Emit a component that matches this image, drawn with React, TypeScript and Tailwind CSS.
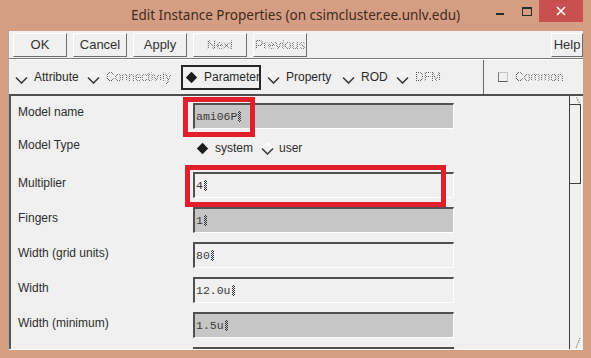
import React from "react";

const sans = "font-['Liberation_Sans',Arial,sans-serif]";
const mono = "font-['Liberation_Mono','Courier_New',monospace]";
const stipple =
  "text-transparent bg-clip-text bg-[repeating-conic-gradient(#5a5a5a_0_25%,transparent_0_50%)] bg-[length:2px_2px]";

function Diamond({ on }: { on?: boolean }) {
  if (on) {
    return (
      <svg width="13" height="13" viewBox="0 0 13 13" className="shrink-0">
        <path d="M6.5 0.8 L12.2 6.5 L6.5 12.2 L0.8 6.5Z" fill="#1c1c1c" />
      </svg>
    );
  }
  return (
    <svg width="13" height="13" viewBox="0 0 13 13" className="shrink-0">
      <path d="M1 6.5 L6.5 1 L12 6.5" fill="none" stroke="#ffffff" strokeWidth="1.4" />
      <path d="M1 6.5 L6.5 12 L12 6.5" fill="none" stroke="#3a3a3a" strokeWidth="1.6" />
    </svg>
  );
}

function Cursor() {
  return (
    <span className="ml-[1px] inline-block h-[11px] w-[3px] bg-[repeating-conic-gradient(#333_0_25%,transparent_0_50%)] bg-[length:2px_2px]" />
  );
}

function Btn({ label, off, w = "w-[54px]" }: { label: string; off?: boolean; w?: string }) {
  return (
    <div
      className={`${w} flex h-[24px] items-center justify-center border-t border-l border-t-white border-l-white border-r border-b border-r-[#6e6e6e] border-b-[#6e6e6e] bg-[#f0f0f0] text-[13px] text-[#333]`}
    >
      <span className={off ? stipple : ""}>{label}</span>
    </div>
  );
}

function Tab({ label, on, off, w, ml }: { label: string; on?: boolean; off?: boolean; w: string; ml?: string }) {
  return (
    <div
      className={`${w} ${ml ?? ""} flex h-[25px] items-center gap-[6px] ${
        on ? "border-2 border-[#262626] px-[2px]" : ""
      }`}
    >
      <Diamond on={on} />
      <span className={`text-[12px] ${off ? stipple : "text-[#2a2a2a]"}`}>{label}</span>
    </div>
  );
}

function Field({ value, ro, mt }: { value: string; ro?: boolean; mt: string }) {
  return (
    <div
      className={`${mt} flex h-[26px] w-[261px] shrink-0 items-center border-t-2 border-l-2 border-t-[#505050] border-l-[#505050] border-r border-b border-r-white border-b-white pl-[1px] ${
        ro ? "bg-[#c6c6c6]" : "bg-[#f0f0f0]"
      } ${mono} text-[11.5px] text-[#3a3a3a]`}
    >
      <span>{value}</span>
      <Cursor />
    </div>
  );
}

function Row({ label, value, ro, h = "h-[35px]", pt = "pt-[12px]", mt = "mt-[8px]" }: {
  label: string;
  value: string;
  ro?: boolean;
  h?: string;
  pt?: string;
  mt?: string;
}) {
  return (
    <div className={`flex ${h} shrink-0 items-start`}>
      <div className={`w-[175px] shrink-0 ${pt} text-[12px] leading-[14px] text-[#2e2e2e]`}>{label}</div>
      <Field value={value} ro={ro} mt={mt} />
    </div>
  );
}

export default function App() {
  return (
    <div className={`relative flex h-[358px] w-[591px] flex-col overflow-hidden bg-[#d59e82] ${sans}`}>
      {/* title bar */}
      <div className="relative flex h-[31px] shrink-0 items-center justify-center">
        <span className="pb-[1px] font-['Noto_Sans',sans-serif] text-[13.5px] text-[#3d2b22]">
          Edit Instance Properties (on csimcluster.ee.unlv.edu)
        </span>
        <div className="absolute left-[496px] top-[13px] h-[2px] w-[8px] bg-[#2b2b2b]" />
        <div className="absolute left-[522px] top-[7px] h-[9px] w-[10px] border border-t-2 border-[#2b2b2b]" />
        <div className="absolute left-[539px] top-0 flex h-[22px] w-[44px] items-center justify-center bg-[#c8504f]">
          <svg width="10" height="10" viewBox="0 0 10 10">
            <path d="M1 1 L9 9 M9 1 L1 9" stroke="#ffffff" strokeWidth="1.6" />
          </svg>
        </div>
      </div>

      {/* client area */}
      <div className="mx-[8px] flex h-[319px] shrink-0 flex-col border-l border-l-[#a8a8a8] bg-[#f0f0f0]">
        {/* buttons */}
        <div className="flex h-[27px] shrink-0 items-start gap-[6px] pl-[4px] pt-[2px]">
          <Btn label="OK" />
          <Btn label="Cancel" />
          <Btn label="Apply" />
          <Btn label="Next" off />
          <Btn label="Previous" off />
          <div className="flex-1" />
          <Btn label="Help" w="w-[32px]" />
        </div>
        <div className="h-[2px] shrink-0 border-t border-t-[#7a7a7a] border-b border-b-white" />

        {/* tabs */}
        <div className="flex h-[34px] shrink-0 items-center pl-[6px]">
          <Tab label="Attribute" w="w-[72px]" />
          <Tab label="Connectivity" off w="w-[94px]" />
          <Tab label="Parameter" on w="w-[80px]" />
          <Tab label="Property" ml="ml-[6px]" w="w-[75px]" />
          <Tab label="ROD" w="w-[54px]" />
          <Tab label="DFM" off w="w-[87px]" />
          <div className="h-full w-[1px] bg-[#6a6a6a]" />
          <div className="ml-[14px] flex items-center gap-[7px]">
            <div className="h-[10px] w-[10px] border border-t-[#c4c4c4] border-r-[#c4c4c4] border-l-[#7a7a7a] border-b-[#5a5a5a]" />
            <span className={`text-[12px] ${stipple}`}>Common</span>
          </div>
        </div>

        {/* parameter panel */}
        <div className="flex min-h-0 flex-1 border-t-2 border-t-[#4e4e4e] border-b border-b-white">
          <div className="flex min-w-0 flex-1 flex-col overflow-hidden border-l-2 border-l-[#555] pl-[7px]">
            <Row label="Model name" value="ami06P" ro h="h-[37px]" pt="pt-[9px]" mt="mt-[7px]" />
            <div className="flex h-[31px] shrink-0 items-start">
              <div className="w-[175px] shrink-0 pt-[5px] text-[12px] leading-[14px] text-[#2e2e2e]">Model Type</div>
              <div className="flex items-center pl-[3px] pt-[8px] text-[12px] leading-[14px] text-[#2e2e2e]">
                <Diamond on />
                <span className="ml-[6px]">system</span>
                <span className="ml-[8px]">
                  <Diamond />
                </span>
                <span className="ml-[5px]">user</span>
              </div>
            </div>
            <Row label="Multiplier" value="4" />
            <Row label="Fingers" value="1" ro />
            <Row label="Width (grid units)" value="80" />
            <Row label="Width" value="12.0u" />
            <Row label="Width (minimum)" value="1.5u" ro />
            <div className="flex h-[35px] shrink-0 items-start">
              <div className="w-[175px] shrink-0" />
              <div className="mt-[8px] h-[26px] w-[261px] shrink-0 border-t-2 border-l-2 border-[#505050]" />
            </div>
          </div>

          {/* scrollbar */}
          <div className="mr-[1px] flex w-[13px] shrink-0 flex-col border-l border-l-[#3e3e3e] border-r border-r-white">
            <div className="relative h-[9px] shrink-0 border-b border-b-[#3e3e3e]">
              <svg width="12" height="9" viewBox="0 0 12 9" className="absolute left-0 top-0">
                <path d="M6 1 L10 8" stroke="#555" strokeWidth="1" strokeDasharray="1 1" />
                <path d="M6 1 L2 8" stroke="#fff" strokeWidth="1" />
              </svg>
            </div>
            <div className="h-[79px] shrink-0 border-r border-b border-r-[#3e3e3e] border-b-[#3e3e3e]" />
            <div className="flex-1" />
            <div className="relative h-[12px] shrink-0">
              <svg width="12" height="12" viewBox="0 0 12 12" className="absolute left-0 top-0">
                <path d="M10 1 L6 11" stroke="#555" strokeWidth="1" strokeDasharray="1 1" />
              </svg>
            </div>
          </div>
        </div>
      </div>

      {/* red annotation boxes */}
      <div className="pointer-events-none absolute left-[183px] top-[97px] h-[40px] w-[72px] border-[5px] border-[#e01f2b]" />
      <div className="pointer-events-none absolute left-[185px] top-[165px] h-[42px] w-[261px] border-[5px] border-[#e01f2b]" />
    </div>
  );
}
